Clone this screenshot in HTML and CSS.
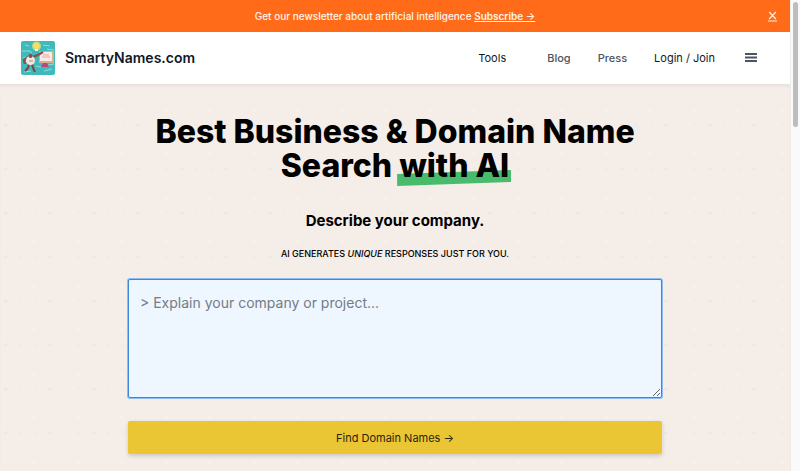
FILE: index.html
```html
<!DOCTYPE html>
<html lang="en">
<head>
<meta charset="utf-8">
<meta name="viewport" content="width=device-width, initial-scale=1">
<title>SmartyNames.com</title>
<link rel="stylesheet" href="styles.css">
</head>
<body>
<div class="page">
  <div class="banner">
    <p class="banner-text">Get our newsletter about artificial intelligence <a class="banner-link" href="#subscribe">Subscribe →</a></p>
    <button class="banner-close" type="button" aria-label="Close">
      <svg width="9" height="11" viewBox="0 0 9 11" fill="none" stroke="currentColor" stroke-width="1.2"><path d="M1.2 1l6.600 7M7.800 1L1.200 8M0 10h9"/></svg>
    </button>
  </div>
  <header class="header">
    <a class="brand" href="#home">
      <svg class="logo" viewBox="0 0 34 34" aria-hidden="true">
        <rect width="34" height="34" rx="2" fill="#3fb9bc"/>
        <path d="M1 10h8l2 2M22 4l7 1M26 8l7 1M3 31l7-1M23 30l8-2M15 25l5 1M27 24l6-1M4 4l4 1M2 17l3-1" stroke="#93dcd8" stroke-width="1" fill="none"/>
        <circle cx="15.500" cy="5" r="4.500" fill="#bfd98a"/>
        <circle cx="15.500" cy="5" r="3" fill="#f7df62"/>
        <path d="M14 8h3v2h-3z" fill="#fff3cf"/>
        <path d="M18 10h15v12H18z" fill="#d7b08f"/>
        <path d="M19 11h12v9H19z" fill="#fbe9e4"/>
        <path d="M22 14h6M21 16h8" stroke="#e4a7a4" stroke-width="1"/>
        <path d="M22 22h4l2 4h-8z" fill="#b8487b"/>
        <path d="M7 16l-4 3 1 4M12 16l5-2 5-3" fill="none" stroke="#8a5450" stroke-width="2.500"/>
        <path d="M8 23l-1 4-3 3M11 23l1 4 2 4" fill="none" stroke="#7c4545" stroke-width="2"/>
        <ellipse cx="9.500" cy="19.500" rx="4.500" ry="4.500" fill="#f3e9df"/>
        <circle cx="9.500" cy="15" r="2" fill="#8a4b45"/>
        <path d="M8 20h4" stroke="#ce7771"/>
      </svg>
      <span class="brand-name">SmartyNames.com</span>
    </a>
    <nav class="nav" aria-label="Main">
      <a class="nav-link nav-dark nav-tools" href="#tools">Tools</a>
      <a class="nav-link" href="#blog">Blog</a>
      <a class="nav-link" href="#press">Press</a>
      <a class="nav-link nav-dark" href="#login">Login / Join</a>
      <button class="menu" type="button" aria-label="Menu">
        <svg width="12" height="10" viewBox="0 0 12 10" fill="currentColor"><path d="M0 0h12v2H0zM0 3.500h12v2H0zM0 7h12v2H0z"/></svg>
      </button>
    </nav>
  </header>
  <main class="hero">
    <h1 class="title">Best Business &amp; Domain Name Search <span class="marked">with AI</span></h1>
    <form class="form">
      <label class="prompt-label" for="company">Describe your company.</label>
      <p class="hint">AI generates <em>unique</em> responses just for you.</p>
      <textarea class="prompt" id="company" placeholder="&gt; Explain your company or project..."></textarea>
      <button class="submit" type="button">Find Domain Names →</button>
    </form>
  </main>
</div>
<div class="scroll-track" aria-hidden="true"><div class="scroll-thumb"></div></div>
</body>
</html>
```
FILE: styles.css
```css
* {
  box-sizing: border-box;
}

body {
  display: flex;
  min-height: 100vh;
  margin: 0;
  overflow: hidden;
  font-family: Inter, "Liberation Sans", sans-serif;
  color: #000;
  background: #f5ede8;
}

a {
  color: inherit;
  text-decoration: none;
}

button {
  padding: 0;
  border: 0;
  background: none;
  font-family: inherit;
}

svg {
  display: block;
}

.page {
  display: flex;
  flex: 1;
  flex-direction: column;
}

.banner {
  display: flex;
  align-items: center;
  height: 32px;
  padding-right: 13px;
  color: #fff3ea;
  background: #ff6b18;
}

.banner-text {
  flex: 1;
  margin: 0;
  padding-left: 22px;
  font-size: 10px;
  font-weight: 500;
  text-align: center;
}

.banner-link {
  font-weight: 600;
  text-decoration: underline;
}

.banner-close {
  color: inherit;
}

.header {
  display: flex;
  align-items: center;
  justify-content: space-between;
  height: 52px;
  padding: 0 33px 0 21px;
  background: #fff;
}

.brand {
  display: flex;
  gap: 10px;
  align-items: center;
}

.logo {
  width: 34px;
  height: 34px;
}

.brand-name {
  font-size: 14px;
  font-weight: 600;
  line-height: 18px;
  color: #111827;
}

.nav {
  display: flex;
  gap: 27px;
  align-items: center;
}

.nav-link {
  font-size: 11px;
  font-weight: 500;
  color: #4b5563;
}

.nav-dark {
  font-weight: 400;
  color: #111827;
}

.nav-tools {
  margin-right: 14px;
}

.menu {
  margin-left: 3px;
  color: #4b5563;
}

.hero {
  flex: 1;
  padding: 31px 128px 16px;
  background:
    radial-gradient(circle at 6px 41px, #efe6e1 1px, transparent 2px) 0 88px / 44px 44px,
    radial-gradient(circle at 20px 41px, #f2e9e4 1px, transparent 2px) 0 88px / 44px 44px,
    radial-gradient(circle at 35px 41px, #f2e9e4 1px, transparent 2px) 0 88px / 44px 44px,
    radial-gradient(circle at 34px 26px, #f8f1ec 1px, transparent 2px) 0 88px / 44px 44px,
    #f5ede8;
  box-shadow: inset 0 4px 4px -3px #dedbd6;
}

.title {
  max-width: 500px;
  margin: 0 auto;
  font-size: 32px;
  font-weight: 800;
  line-height: 34px;
  text-align: center;
}

.marked {
  position: relative;
  z-index: 0;
  white-space: nowrap;
}

.marked::before {
  position: absolute;
  right: -2px;
  bottom: -1px;
  left: -2px;
  z-index: -1;
  height: 16px;
  background: #48bb6c;
  clip-path: polygon(0 25%, 100% 0, 100% 75%, 0 100%);
  content: "";
}

.form {
  display: flex;
  flex-direction: column;
  margin-top: 28px;
}

.prompt-label {
  font-size: 15px;
  font-weight: 700;
  line-height: 20px;
  text-align: center;
}

.hint {
  margin: 15px 0 17px;
  font-size: 9px;
  font-weight: 500;
  line-height: 16px;
  text-align: center;
  text-transform: uppercase;
}

.prompt {
  width: 100%;
  height: 119px;
  padding: 13px 11px;
  border: 1px solid #3f86df;
  border-radius: 2px;
  outline: 0;
  font-family: inherit;
  font-size: 14px;
  line-height: 20px;
  background: #eef7ff;
  box-shadow: 0 0 0 1px #8dbcf4;
  resize: vertical;
}

.prompt::placeholder {
  color: #757b85;
}

.submit {
  height: 33px;
  margin-top: 23px;
  border-radius: 2px;
  font-size: 11px;
  color: #2b2411;
  background: #ebc634;
  box-shadow: 0 2px 4px rgb(0 0 0 / 16%);
}

.scroll-track {
  width: 10px;
  padding: 2px;
  border-left: 1px solid #ececec;
  background: #fafafa;
}

.scroll-thumb {
  width: 5px;
  height: 125px;
  border-radius: 3px;
  background: #bdbdbd;
}
```
